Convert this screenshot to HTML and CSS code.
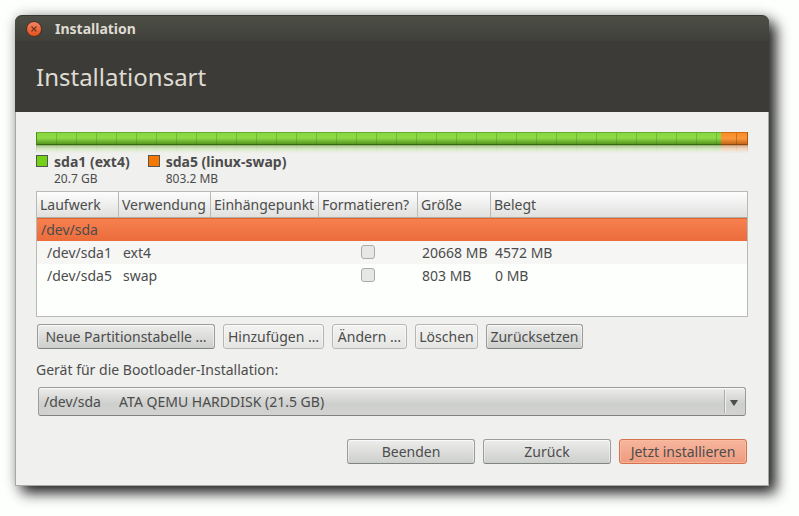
FILE: index.html
```html
<!DOCTYPE html>
<html lang="de">
<head>
<meta charset="utf-8">
<title>Installation</title>
<link rel="stylesheet" href="styles.css">
</head>
<body>
<div class="window">
  <header class="head">
    <div class="titlebar">
      <button class="close" type="button" aria-label="Schließen">
        <svg viewBox="0 0 16 16" width="16" height="16" aria-hidden="true"><path d="M5.5 5.5l5 5M10.5 5.5l-5 5" stroke="#6b3520" stroke-width="1.1" fill="none"/></svg>
      </button>
      <span class="title">Installation</span>
    </div>
    <h1>Installationsart</h1>
  </header>
  <main class="content">
    <div class="disk">
      <div class="bar"><div class="part green"></div><div class="part orange"></div></div>
      <div class="bar reflection"><div class="part green"></div><div class="part orange"></div></div>
    </div>
    <ul class="legend">
      <li><span class="swatch green-swatch"></span><div><strong>sda1 (ext4)</strong><small>20.7 GB</small></div></li>
      <li><span class="swatch orange-swatch"></span><div><strong>sda5 (linux-swap)</strong><small>803.2 MB</small></div></li>
    </ul>
    <div class="list">
      <table>
        <colgroup><col class="c-drive"><col class="c-use"><col class="c-mount"><col class="c-format"><col class="c-size"><col></colgroup>
        <thead>
          <tr><th>Laufwerk</th><th>Verwendung</th><th>Einhängepunkt</th><th>Formatieren?</th><th>Größe</th><th>Belegt</th></tr>
        </thead>
        <tbody>
          <tr class="selected"><td>/dev/sda</td><td></td><td></td><td></td><td></td><td></td></tr>
          <tr class="odd"><td class="child">/dev/sda1</td><td>ext4</td><td></td><td class="check"><input type="checkbox" aria-label="sda1 formatieren"></td><td>20668 MB</td><td>4572 MB</td></tr>
          <tr><td class="child">/dev/sda5</td><td>swap</td><td></td><td class="check"><input type="checkbox" aria-label="sda5 formatieren"></td><td>803 MB</td><td>0 MB</td></tr>
        </tbody>
      </table>
    </div>
    <div class="actions">
      <button class="btn" type="button">Neue Partitionstabelle …</button>
      <button class="btn" type="button" disabled>Hinzufügen …</button>
      <button class="btn" type="button" disabled>Ändern …</button>
      <button class="btn" type="button" disabled>Löschen</button>
      <button class="btn" type="button">Zurücksetzen</button>
    </div>
    <label class="boot-label" for="boot">Gerät für die Bootloader-Installation:</label>
    <div class="combo">
      <select id="boot"><option>/dev/sda&nbsp;&nbsp;&nbsp;&nbsp; ATA QEMU HARDDISK (21.5 GB)</option></select>
      <span class="arrow"><svg viewBox="0 0 8 6" width="8" height="6" aria-hidden="true"><path d="M0 0h8L4.500 5.500h-1z" fill="#4c4c4c"/></svg></span>
    </div>
    <div class="footer">
      <button class="btn" type="button">Beenden</button>
      <button class="btn" type="button">Zurück</button>
      <button class="btn primary" type="button">Jetzt installieren</button>
    </div>
  </main>
</div>
</body>
</html>
```
FILE: styles.css
```css
* { box-sizing: border-box; }
body {
  margin: 0;
  padding: 15px 30px 30px 15px;
  background: #fdfffd;
  color: #4c4c4c;
  font: 14px/20px "Noto Sans", "Open Sans", sans-serif;
}
button, select { font: inherit; color: inherit; }
.window {
  border: 1px solid #a5aaa3;
  border-top: 0;
  border-radius: 8px 8px 0 0;
  background: #f0f0ee;
  box-shadow: 7px 7px 14px rgba(0, 0, 0, 0.85), 0 0 14px rgba(0, 0, 0, 0.2);
}
.head {
  margin: 0 -1px;
  height: 97px;
  border-radius: 7px 7px 0 0;
  border-top: 1px solid #35382f;
  background: linear-gradient(#4d4e46, #3f4039 25px, #3c3b37 25px);
  color: #dfdbd2;
}
.titlebar {
  display: flex;
  align-items: center;
  gap: 13px;
  height: 26px;
  padding: 0 11px;
}
.close {
  display: flex;
  width: 16px;
  height: 16px;
  padding: 0;
  border: 1px solid #51301f;
  border-radius: 50%;
  background: linear-gradient(#f58463, #e6511c);
}
.close svg { margin: -1px; }
.title { font-weight: bold; }
h1 { margin: 17px 21px 0; font-size: 24px; line-height: 36px; font-weight: 400; }
.content { padding: 20px 20px 21px; }
.bar { display: flex; height: 13px; }
.part { border: 1px solid #4d8c1b; }
.green {
  flex: 1;
  border-color: #68ad32 #4d8c1b #356c0b #4d8c1b;
  border-right: 0;
  background: repeating-linear-gradient(90deg, transparent 0 19px, rgba(70, 110, 40, 0.3) 19px 20px), linear-gradient(#88d83d, #8fda48 45%, #58981f);
}
.orange {
  width: 27px;
  border-color: #cc6c15 #a65612 #914507 #b86218;
  border-left: 0;
  background: linear-gradient(90deg, transparent 15px, rgba(130, 60, 0, 0.4) 15px 16px, transparent 16px), linear-gradient(#fa8d28, #f99739 50%, #c5681a);
}
.reflection { height: 8px; transform: scaleY(-1); opacity: 0.5; mask-image: linear-gradient(transparent, #000); }
.legend { display: flex; gap: 18px; margin: 0; padding: 0; list-style: none; }
.legend li { display: flex; gap: 6px; height: 38px; }
.legend strong, .legend small { display: block; }
.legend strong { line-height: 18px; }
.legend small { font-size: 12px; line-height: 16px; }
.swatch { width: 12px; height: 12px; margin-top: 2px; border: 1px solid #555; }
.green-swatch { background: #73d216; }
.orange-swatch { background: #f57900; }
.list { height: 126px; border: 1px solid #b9b9b5; background: #fdfffd; }
table { width: 100%; border-collapse: separate; border-spacing: 0; table-layout: fixed; }
.c-drive { width: 82px; }
.c-use { width: 92px; }
.c-mount { width: 108px; }
.c-format { width: 99px; }
.c-size { width: 73px; }
th {
  height: 26px;
  padding: 0 3px;
  border-right: 1px solid #b9b9b5;
  border-bottom: 1px solid #b0aca6;
  background: linear-gradient(#fcfdfc, #e0e1df);
  font-weight: normal;
  text-align: left;
  white-space: nowrap;
}
th:last-child { border-right: 0; }
td { height: 23px; padding: 0 4px; white-space: nowrap; line-height: 20px; }
.child { padding: 0 0 0 10px; }
.selected td { background: linear-gradient(#e06630 0 1px, #f6804f 1px, #ec6c3b); }
.odd td { background: #f6f6f5; }
.check { padding: 0 6px 2px 4px; }
input[type="checkbox"] {
  appearance: none;
  display: block;
  width: 14px;
  height: 14px;
  margin: 0 auto;
  border: 1px solid #aaaaa7;
  border-radius: 3px;
  background: #e7e7e6;
}
.actions {
  display: grid;
  grid-template-columns: 178px 101px 75px 63px 97px;
  gap: 8px;
  margin: 7px 1px 0;
}
.btn {
  height: 25px;
  padding: 0 2px;
  border: 1px solid #9b9d99;
  border-bottom-color: #818380;
  border-radius: 3px;
  background: linear-gradient(#ededec, #cdcfcc);
  box-shadow: inset 0 1px #fafafa, inset 1px 0 rgba(255, 255, 255, 0.4), inset -1px 0 rgba(255, 255, 255, 0.4);
  line-height: 20px;
  white-space: nowrap;
}
.btn:disabled { color: #4c4c4c; border-color: #b5b7b3; background: linear-gradient(#f3f3f2, #e5e6e3); }
.boot-label { display: block; margin-top: 11px; }
.combo { position: relative; margin: 7px 2px 0; }
.combo select {
  appearance: none;
  display: block;
  width: 100%;
  height: 29px;
  padding: 0 30px 0 5px;
  border: 1px solid #9b9d99;
  border-bottom-color: #818380;
  border-radius: 3px;
  background: linear-gradient(#ededec, #cdcfcc 60%, #d3d4d2);
  box-shadow: inset 0 1px #fafafa;
}
.arrow {
  position: absolute;
  top: 3px;
  right: 1px;
  bottom: 3px;
  display: flex;
  align-items: center;
  width: 21px;
  padding: 2px 0 0 5px;
  border-left: 1px solid #a9aba7;
  box-shadow: inset 1px 0 #f0f0ef;
  pointer-events: none;
}
.footer { display: flex; justify-content: flex-end; gap: 8px; margin: 23px 1px 0; }
.footer .btn { width: 128px; }
.primary.btn {
  border-color: #d4714e;
  background: linear-gradient(#f7b69f, #ed9b7e);
  box-shadow: inset 0 0 0 1px rgba(255, 190, 160, 0.7);
}
```
